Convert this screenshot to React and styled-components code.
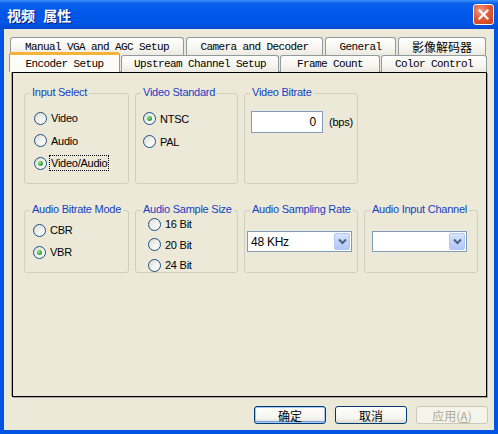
import React from 'react';
import styled, { createGlobalStyle } from 'styled-components';

const GlobalStyle = createGlobalStyle`
  html, body {
    margin: 0;
    padding: 0;
    background: #ECE9D8;
  }
  body {
    font-family: "Liberation Sans", Arial, sans-serif;
    font-size: 11px;
    color: #000;
  }
`;

const Window = styled.div`
  width: 498px;
  height: 434px;
  display: flex;
  flex-direction: column;
  background: #0054E3;
  box-sizing: border-box;
`;

const TitleBar = styled.div`
  height: 29px;
  flex: none;
  display: flex;
  align-items: center;
  justify-content: space-between;
  padding: 0 4px 0 7px;
  background: linear-gradient(180deg, #3D8FF8 0%, #0A61EC 12%, #0057E8 45%, #0056E6 80%, #0349D0 100%);
`;

const Title = styled.span`
  color: #fff;
  font-family: "Noto Sans CJK SC", "Liberation Sans", sans-serif;
  font-size: 14px;
  font-weight: 700;
  word-spacing: 5px;
  text-shadow: 1px 1px 0 #0A1E80;
`;

const CloseButton = styled.div`
  width: 21px;
  height: 21px;
  box-sizing: border-box;
  border: 1px solid #fff;
  border-radius: 3px;
  background: radial-gradient(circle at 35% 30%, #F0A08A 0%, #E35B35 45%, #C7401A 100%);
  display: flex;
  align-items: center;
  justify-content: center;
`;

const Client = styled.div`
  flex: 1;
  margin: 0 4px 4px 4px;
  background: #ECE9D8;
  display: flex;
  flex-direction: column;
  padding-top: 8px;
`;

const TabRow = styled.div`
  display: flex;
  align-items: flex-end;
  height: ${p => p.$h}px;
  margin-left: ${p => p.$ml}px;
  gap: ${p => p.$gap}px;
  position: relative;
  z-index: ${p => p.$z || 0};
`;

const Tab = styled.div`
  width: ${p => p.$w}px;
  height: ${p => (p.$active ? 20 : p.$h)}px;
  box-sizing: border-box;
  border: 1px solid #919B9C;
  border-bottom: none;
  border-top: ${p => (p.$active ? '3px solid #F5B437' : '1px solid #919B9C')};
  border-radius: 3px 3px 0 0;
  background: ${p => (p.$active
    ? '#FCFCF8'
    : 'linear-gradient(180deg, #FFFFFF 0%, #F7F6F1 55%, #ECEAE2 100%)')};
  display: flex;
  align-items: center;
  justify-content: center;
  font-family: ${p => (p.$cjk ? '"Noto Sans CJK SC", sans-serif' : '"Liberation Mono", monospace')};
  font-size: ${p => (p.$cjk ? '12px' : '11px')};
  letter-spacing: ${p => (p.$cjk ? '0' : '-0.6px')};
  white-space: nowrap;
  color: #000;
  position: relative;
  z-index: ${p => (p.$active ? 2 : 1)};
`;

const Panel = styled.div`
  width: 475px;
  height: 325px;
  margin-left: 8px;
  box-sizing: border-box;
  border: 1px solid #000;
  box-shadow: -1px -1px 0 #ACA899, 1px 1px 0 #ACA899;
  background: #ECE9D8;
  padding: 20px 0 0 11px;
  position: relative;
  z-index: 1;
`;

const GroupGrid = styled.div`
  display: grid;
  grid-template-columns: 105px 103px 114px 114px;
  grid-template-rows: 91px 63px;
  column-gap: 6px;
  row-gap: 26px;
  letter-spacing: -0.25px;
`;

const Group = styled.div`
  position: relative;
  border: 1px solid #D0D0BF;
  border-radius: 3px;
  padding: ${p => p.$pad};
  display: flex;
  flex-direction: ${p => (p.$row ? 'row' : 'column')};
  align-items: ${p => (p.$row ? 'flex-start' : 'stretch')};
  height: 100%;
  box-sizing: border-box;
`;

const Legend = styled.span`
  position: absolute;
  top: -8px;
  left: 5px;
  padding: 0 2px;
  background: #ECE9D8;
  color: #1441C4;
  font-size: 11px;
  line-height: 13px;
  white-space: nowrap;
`;

const RadioRow = styled.label`
  display: flex;
  align-items: center;
  gap: 3px;
  height: ${p => p.$h}px;
  flex: none;
  font-size: 11px;
`;

const RadioCircle = styled.span`
  width: 13px;
  height: 13px;
  box-sizing: border-box;
  border-radius: 50%;
  border: 1px solid #1C5180;
  background: linear-gradient(135deg, #DCDBD3 0%, #F4F4F0 55%, #FFFFFF 100%);
  display: flex;
  align-items: center;
  justify-content: center;
  flex: none;

  &::after {
    content: '';
    display: ${p => (p.$checked ? 'block' : 'none')};
    width: 5px;
    height: 5px;
    border-radius: 50%;
    background: radial-gradient(circle at 35% 35%, #9BE59B 0%, #3DB13D 50%, #1E8C1E 100%);
  }
`;

const RadioText = styled.span`
  padding: 0 1px;
  line-height: 14px;
  outline: ${p => (p.$focus ? '1px dotted #000' : 'none')};
`;

const TextBox = styled.div`
  width: 72px;
  height: 22px;
  box-sizing: border-box;
  border: 1px solid #7F9DB9;
  background: #fff;
  display: flex;
  align-items: center;
  justify-content: flex-end;
  padding-right: 6px;
  font-size: 12px;
`;

const Unit = styled.span`
  margin: 5px 0 0 6px;
  font-size: 11px;
`;

const Combo = styled.div`
  width: ${p => p.$w}px;
  height: 21px;
  box-sizing: border-box;
  border: 1px solid #7F9DB9;
  background: #fff;
  display: flex;
  align-items: center;
  justify-content: space-between;
  padding: 1px;
  font-size: 12px;
`;

const ComboText = styled.span`
  padding-left: 2px;
`;

const ComboButton = styled.span`
  width: 16px;
  height: 17px;
  box-sizing: border-box;
  border: 1px solid #B4C8F6;
  border-radius: 2px;
  background: linear-gradient(180deg, #D9E5FD 0%, #C1D3FB 50%, #B2C8F6 100%);
  display: flex;
  align-items: center;
  justify-content: center;
`;

const ButtonRow = styled.div`
  display: flex;
  justify-content: flex-end;
  gap: 9px;
  margin-top: 9px;
  padding-right: 6px;
`;

const Button = styled.div`
  width: 72px;
  height: 18px;
  box-sizing: border-box;
  border: 1px solid ${p => (p.$disabled ? '#C9C7BA' : '#003C74')};
  border-radius: 3px;
  background: ${p => (p.$disabled
    ? '#F5F4EA'
    : 'linear-gradient(180deg, #FFFFFF 0%, #F5F4EF 70%, #DCD8CC 100%)')};
  box-shadow: ${p => (p.$default ? 'inset 0 0 0 1px #A9C6F7, inset 0 -1px 0 1px #7BA2E7' : 'none')};
  color: ${p => (p.$disabled ? '#ACA899' : '#000')};
  display: flex;
  align-items: center;
  justify-content: center;
  font-family: "Noto Sans CJK SC", "Liberation Sans", sans-serif;
  font-size: 12px;
`;

const Radio = ({ label, checked, focus, h }) => (
  <RadioRow $h={h}>
    <RadioCircle $checked={checked} />
    <RadioText $focus={focus}>{label}</RadioText>
  </RadioRow>
);

const Chevron = () => (
  <svg width="9" height="7" viewBox="0 0 9 7">
    <path d="M1 1.5 L4.5 5 L8 1.5" fill="none" stroke="#4D6185" strokeWidth="2" />
  </svg>
);

const App = () => (
  <>
    <GlobalStyle />
    <Window>
      <TitleBar>
        <Title>视频 属性</Title>
        <CloseButton>
          <svg width="11" height="11" viewBox="0 0 11 11">
            <path d="M1.5 1.5 L9.5 9.5 M9.5 1.5 L1.5 9.5" stroke="#fff" strokeWidth="2.2" strokeLinecap="square" />
          </svg>
        </CloseButton>
      </TitleBar>
      <Client>
        <TabRow $h={18} $ml={6} $gap={2}>
          <Tab $w={174} $h={18}>Manual VGA and AGC Setup</Tab>
          <Tab $w={137} $h={18}>Camera and Decoder</Tab>
          <Tab $w={71} $h={18}>General</Tab>
          <Tab $w={88} $h={18} $cjk>影像解码器</Tab>
        </TabRow>
        <TabRow $h={17} $ml={5} $gap={1} $z={2}>
          <Tab $w={111} $h={17} $active>Encoder Setup</Tab>
          <Tab $w={158} $h={17}>Upstream Channel Setup</Tab>
          <Tab $w={100} $h={17}>Frame Count</Tab>
          <Tab $w={106} $h={17}>Color Control</Tab>
        </TabRow>
        <Panel>
          <GroupGrid>
            <Group $pad="13px 0 0 9px">
              <Legend>Input Select</Legend>
              <Radio label="Video" h={22.5} />
              <Radio label="Audio" h={22.5} />
              <Radio label="Video/Audio" h={22.5} checked focus />
            </Group>
            <Group $pad="13px 0 0 7px">
              <Legend>Video Standard</Legend>
              <Radio label="NTSC" h={23} checked />
              <Radio label="PAL" h={23} />
            </Group>
            <Group $pad="17px 0 0 6px" $row>
              <Legend>Video Bitrate</Legend>
              <TextBox>0</TextBox>
              <Unit>(bps)</Unit>
            </Group>
            <div />
            <Group $pad="8px 0 0 8px">
              <Legend>Audio Bitrate Mode</Legend>
              <Radio label="CBR" h={22} />
              <Radio label="VBR" h={22} checked />
            </Group>
            <Group $pad="3px 0 0 12px">
              <Legend>Audio Sample Size</Legend>
              <Radio label="16 Bit" h={20.5} />
              <Radio label="20 Bit" h={20.5} />
              <Radio label="24 Bit" h={20.5} />
            </Group>
            <Group $pad="20px 0 0 2px">
              <Legend>Audio Sampling Rate</Legend>
              <Combo $w={105}>
                <ComboText>48 KHz</ComboText>
                <ComboButton><Chevron /></ComboButton>
              </Combo>
            </Group>
            <Group $pad="20px 0 0 7px">
              <Legend>Audio Input Channel</Legend>
              <Combo $w={95}>
                <ComboText />
                <ComboButton><Chevron /></ComboButton>
              </Combo>
            </Group>
          </GroupGrid>
        </Panel>
        <ButtonRow>
          <Button $default>确定</Button>
          <Button>取消</Button>
          <Button $disabled>应用(<u>A</u>)</Button>
        </ButtonRow>
      </Client>
    </Window>
  </>
);

export default App;
